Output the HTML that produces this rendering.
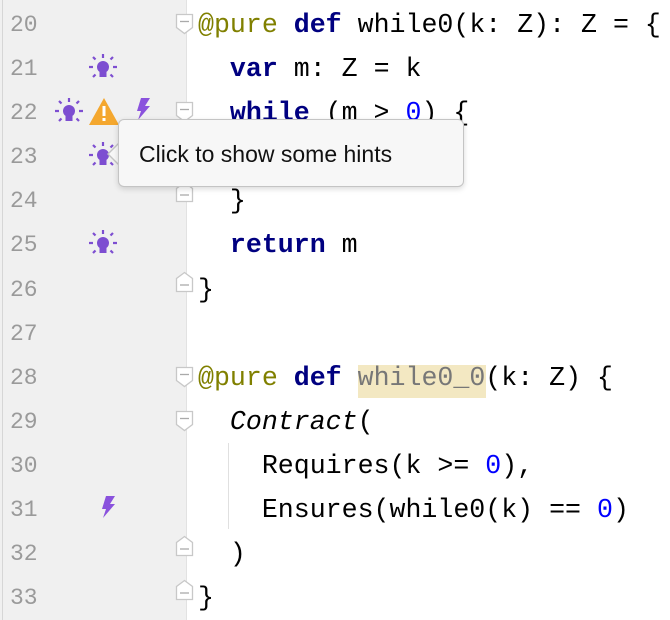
<!DOCTYPE html><html><head><style>
body{margin:0;width:670px;height:620px;overflow:hidden;background:#fff;position:relative;font-family:"Liberation Mono",monospace}
.g{position:absolute;left:0;top:0;width:186px;height:620px;background:#f0f0f0;border-right:1px solid #e2e2e2}
.gl{position:absolute;left:2px;top:0;width:1px;height:620px;background:#d6d6d6}
.n{position:absolute;left:10px;width:40px;font:23px "Liberation Mono",monospace;color:#9a9a9a;line-height:44px}
.c{position:absolute;left:198px;font-size:26.6px;line-height:44px;white-space:pre;color:#000}
.k{color:#000080;font-weight:bold}.a{color:#808000}.num{color:#0000ff}.i{font-style:italic}
.tip{position:absolute;left:118px;top:119px;width:346px;height:68px;background:#f7f7f7;border:1px solid #c4c4c4;border-radius:6px;box-shadow:0 2px 6px rgba(0,0,0,.15);font:23px "Liberation Sans",sans-serif;color:#111;line-height:68px;box-sizing:border-box;padding-left:20px}
.ar{position:absolute;left:107px;top:142px;width:0;height:0;border-top:12px solid transparent;border-bottom:12px solid transparent;border-right:12px solid #c4c4c4}
.ar2{position:absolute;left:109px;top:143px;width:0;height:0;border-top:11px solid transparent;border-bottom:11px solid transparent;border-right:11px solid #f7f7f7}
</style></head><body>
<div class="g"></div><div class="gl"></div>
<div class="n" style="top:3px">20</div><div class="n" style="top:47px">21</div><div class="n" style="top:91px">22</div><div class="n" style="top:135px">23</div><div class="n" style="top:179px">24</div><div class="n" style="top:223px">25</div><div class="n" style="top:268px">26</div><div class="n" style="top:312px">27</div><div class="n" style="top:356px">28</div><div class="n" style="top:400px">29</div><div class="n" style="top:444px">30</div><div class="n" style="top:488px">31</div><div class="n" style="top:532px">32</div><div class="n" style="top:576px">33</div>

<div style="position:absolute;left:358px;top:365px;width:128px;height:33px;background:#f3e8c2"></div>
<div style="position:absolute;left:228px;top:443px;width:1px;height:86px;background:#e0e0e0"></div>

<div class="c" style="top:3px"><span class="a">@pure</span> <span class="k">def</span> while0(k: Z): Z = {</div>
<div class="c" style="top:47px">  <span class="k">var</span> m: Z = k</div>
<div class="c" style="top:91px">  <span class="k">while</span> (m &gt; <span class="num">0</span>) {</div>
<div class="c" style="top:179px">  }</div>
<div class="c" style="top:223px">  <span class="k">return</span> m</div>
<div class="c" style="top:268px">}</div>
<div class="c" style="top:356px"><span class="a">@pure</span> <span class="k">def</span> <span style="color:#777">while0_0</span>(k: Z) {</div>
<div class="c" style="top:400px">  <span class="i">Contract</span>(</div>
<div class="c" style="top:444px">    Requires(k &gt;= <span class="num">0</span>),</div>
<div class="c" style="top:488px">    Ensures(while0(k) == <span class="num">0</span>)</div>
<div class="c" style="top:532px">  )</div>
<div class="c" style="top:576px">}</div>

<svg width="670" height="620" style="position:absolute;left:0;top:0">
<defs>
<g id="fd"><path d="M0.5 0.5h16v13l-8 6l-8-6z" fill="#fff" stroke="#c8c8c8" stroke-width="1.3"/><path d="M4 7.5h9" stroke="#aaa" stroke-width="1.3"/></g>
<g id="fu"><path d="M0.5 19.5h16v-13l-8-6l-8 6z" fill="#fff" stroke="#c8c8c8" stroke-width="1.3"/><path d="M4 13h9" stroke="#aaa" stroke-width="1.3"/></g>
<g id="bulb" fill="#7d4ed1" stroke="#7d4ed1"><circle cx="0" cy="-1" r="6" stroke="none"/><rect x="-3.5" y="4" width="7" height="5" stroke="none"/><g stroke-width="2.2"><path d="M0-14v4M-10-1h-4M10-1h4M-7.5-8.5l-2.5-2.5M7.5-8.5l2.5-2.5M-7.5 6.5l-2.5 2.5M7.5 6.5l2.5 2.5"/></g></g>
<g id="bolt"><path d="M3-12h9l-5 8h5l-12 14l3-9h-4z" fill="#8a52dd"/></g>
</defs>
<use href="#fd" x="176" y="14"/><use href="#fd" x="176" y="102"/><use href="#fu" x="176" y="182"/><use href="#fu" x="176" y="272"/>
<use href="#fd" x="176" y="367"/><use href="#fd" x="176" y="411"/><use href="#fu" x="176" y="536"/><use href="#fu" x="176" y="580"/>
<use href="#bulb" x="103" y="68"/><use href="#bulb" x="69" y="112"/><use href="#bulb" x="103" y="156"/><use href="#bulb" x="103" y="244"/>
<path d="M104 98l15 27h-30z" fill="#f4a72e"/><rect x="102.5" y="106" width="3" height="10" fill="#fff"/><rect x="102.5" y="118" width="3" height="3" fill="#fff"/>
<use href="#bolt" x="138" y="110"/><use href="#bolt" x="103" y="508"/>
</svg>
<div class="ar"></div><div class="ar2"></div>
<div class="tip">Click to show some hints</div>
</body></html>
